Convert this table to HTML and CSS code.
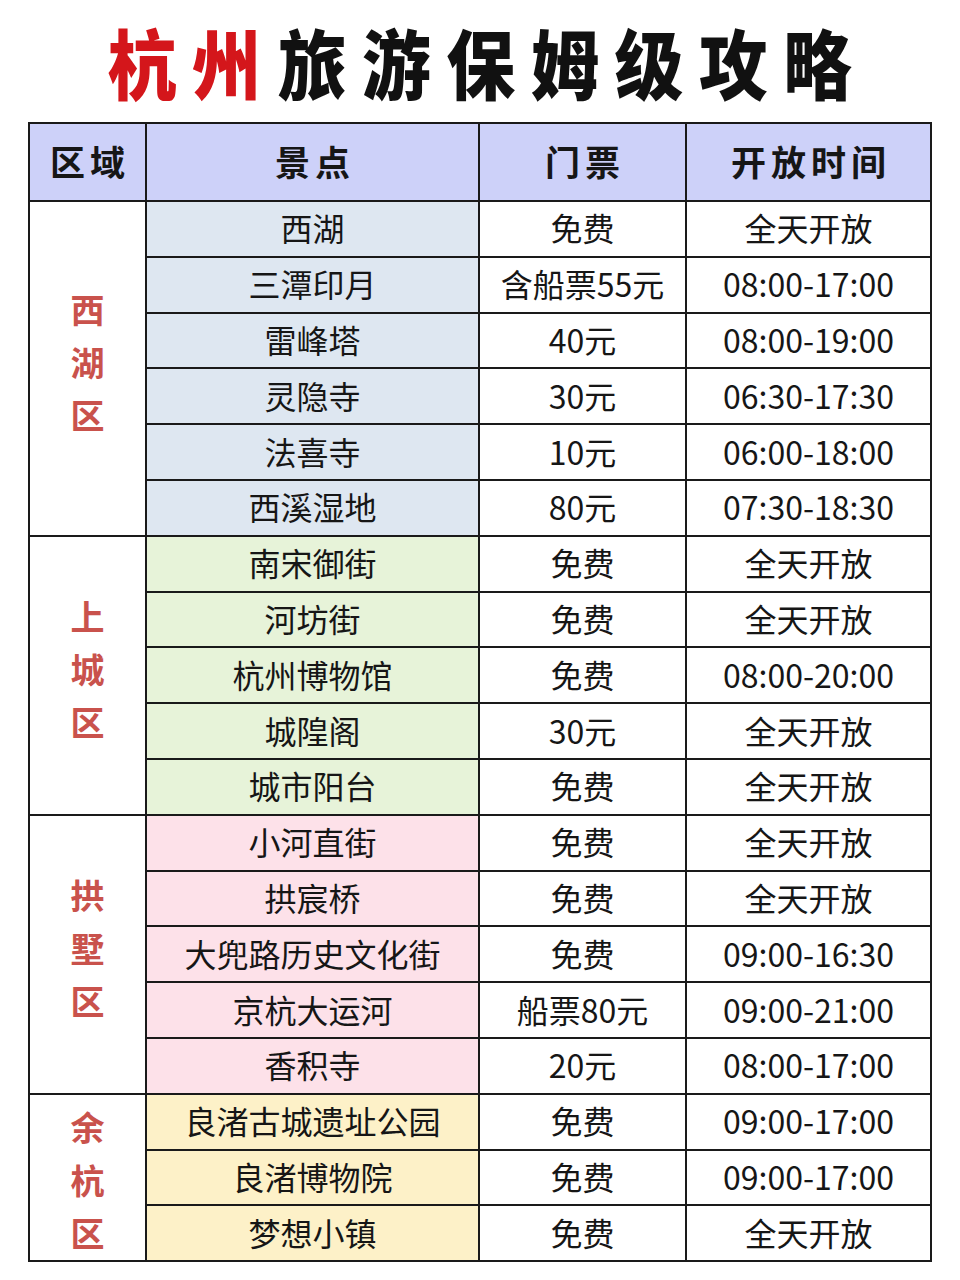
FILE: index.html
```html
<!DOCTYPE html>
<html lang="zh-CN">
<head>
<meta charset="utf-8">
<title>杭州旅游保姆级攻略</title>
<link rel="stylesheet" href="styles.css">
</head>
<body>
<h1 class="title"><span class="red">杭州</span>旅游保姆级攻略</h1>
<table class="guide">
  <colgroup>
    <col class="c-area"><col class="c-spot"><col class="c-price"><col class="c-time">
  </colgroup>
  <thead>
    <tr><th>区域</th><th>景点</th><th>门票</th><th>开放时间</th></tr>
  </thead>
  <tbody class="xh">
    <tr><td class="area" rowspan="6">西<br>湖<br>区</td><td class="spot">西湖</td><td>免费</td><td>全天开放</td></tr>
    <tr><td class="spot">三潭印月</td><td>含船票55元</td><td>08:00-17:00</td></tr>
    <tr><td class="spot">雷峰塔</td><td>40元</td><td>08:00-19:00</td></tr>
    <tr><td class="spot">灵隐寺</td><td>30元</td><td>06:30-17:30</td></tr>
    <tr><td class="spot">法喜寺</td><td>10元</td><td>06:00-18:00</td></tr>
    <tr><td class="spot">西溪湿地</td><td>80元</td><td>07:30-18:30</td></tr>
  </tbody>
  <tbody class="sc">
    <tr><td class="area" rowspan="5">上<br>城<br>区</td><td class="spot">南宋御街</td><td>免费</td><td>全天开放</td></tr>
    <tr><td class="spot">河坊街</td><td>免费</td><td>全天开放</td></tr>
    <tr><td class="spot">杭州博物馆</td><td>免费</td><td>08:00-20:00</td></tr>
    <tr><td class="spot">城隍阁</td><td>30元</td><td>全天开放</td></tr>
    <tr><td class="spot">城市阳台</td><td>免费</td><td>全天开放</td></tr>
  </tbody>
  <tbody class="gs">
    <tr><td class="area" rowspan="5">拱<br>墅<br>区</td><td class="spot">小河直街</td><td>免费</td><td>全天开放</td></tr>
    <tr><td class="spot">拱宸桥</td><td>免费</td><td>全天开放</td></tr>
    <tr><td class="spot">大兜路历史文化街</td><td>免费</td><td>09:00-16:30</td></tr>
    <tr><td class="spot">京杭大运河</td><td>船票80元</td><td>09:00-21:00</td></tr>
    <tr><td class="spot">香积寺</td><td>20元</td><td>08:00-17:00</td></tr>
  </tbody>
  <tbody class="yh">
    <tr><td class="area" rowspan="3">余<br>杭<br>区</td><td class="spot">良渚古城遗址公园</td><td>免费</td><td>09:00-17:00</td></tr>
    <tr><td class="spot">良渚博物院</td><td>免费</td><td>09:00-17:00</td></tr>
    <tr><td class="spot">梦想小镇</td><td>免费</td><td>全天开放</td></tr>
  </tbody>
</table>
</body>
</html>
```

FILE: styles.css
```css
html, body {
  margin: 0;
  padding: 0;
  background: #ffffff;
}
body {
  font-family: "Noto Sans CJK SC", "Noto Sans", sans-serif;
  color: #161616;
  width: 960px;
}
.title {
  margin: 0;
  padding-top: 21px;
  height: 102px;
  box-sizing: border-box;
  text-align: center;
  font-size: 76px;
  line-height: 80px;
  font-weight: 900;
  letter-spacing: 17px;
  text-indent: 17px;
  color: #111;
  transform: scaleX(0.905);
  transform-origin: 477px 0;
}
.title .red {
  color: #d4161b;
  margin-right: 2px;
}
.guide {
  margin: 20px auto 0;
  width: 904px;
  border-collapse: collapse;
  table-layout: fixed;
  border: 2px solid #111;
}
.c-area { width: 117px; }
.c-spot { width: 333px; }
.c-price { width: 207px; }
.c-time { width: 245px; }
.guide th, .guide td {
  border: 2px solid #1a1a1a;
  text-align: center;
  vertical-align: middle;
  padding: 0;
}
.guide th {
  background: #cdd1f9;
  height: 72px;
  font-size: 35px;
  font-weight: 700;
  letter-spacing: 5px;
  text-indent: 5px;
  padding-bottom: 4px;
}
.guide td {
  height: 50.8px;
  font-size: 32px;
  font-weight: 400;
  padding-bottom: 3px;
}
.guide td.area {
  background: #fff;
  color: #c9524c;
  font-weight: 700;
  font-size: 34px;
  line-height: 53px;
  padding-bottom: 14px;
}
.guide .yh td.area {
  padding-bottom: 0;
  padding-top: 4px;
}
.xh .spot { background: #dee7f1; }
.sc .spot { background: #e7f3d9; }
.gs .spot { background: #fde1e9; }
.yh .spot { background: #fdf1c8; }
```
